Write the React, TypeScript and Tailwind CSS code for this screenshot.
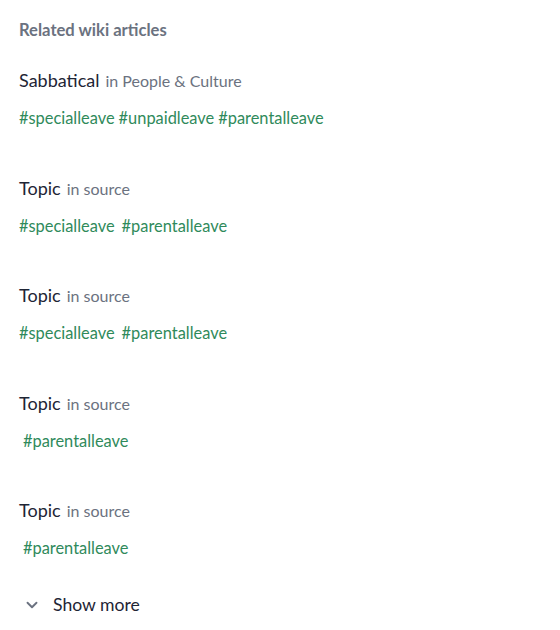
import React from 'react';
import { ChevronDown } from 'lucide-react';

interface Article {
  title: string;
  source: string;
  tags: string[];
  indent?: boolean;
  spaced?: boolean;
}

const articles: Article[] = [
  { title: 'Sabbatical', source: 'in People & Culture', tags: ['#specialleave', '#unpaidleave', '#parentalleave'] },
  { title: 'Topic', source: 'in source', tags: ['#specialleave', '#parentalleave'], spaced: true },
  { title: 'Topic', source: 'in source', tags: ['#specialleave', '#parentalleave'], spaced: true },
  { title: 'Topic', source: 'in source', tags: ['#parentalleave'], indent: true },
  { title: 'Topic', source: 'in source', tags: ['#parentalleave'], indent: true },
];

const ArticleRow: React.FC<{ article: Article }> = ({ article }) => (
  <div className="flex flex-col gap-[13px]">
    <div className="flex items-baseline gap-[6px] leading-6">
      <span className="text-[18px] text-[#1e2535]">{article.title}</span>
      <span className="text-[16px] text-[#6b7280]">{article.source}</span>
    </div>
    <div className={`flex leading-6 text-[16.4px] text-[#2f8a5b] ${article.spaced ? 'gap-[7px]' : 'gap-[4px]'} ${article.indent ? 'pl-[4px]' : ''}`}>
      {article.tags.map((tag, i) => (
        <span key={i}>{tag}</span>
      ))}
    </div>
  </div>
);

export default function App() {
  return (
    <div className="w-[560px] h-[630px] bg-white px-[19px] pt-[20px]" style={{ fontFamily: 'Lato, "Noto Sans", sans-serif' }}>
      <h3 className="text-[16.6px] leading-5 font-bold text-[#6b7280]">Related wiki articles</h3>

      <div className="mt-[28px] flex flex-col gap-[45.5px]">
        {articles.map((a, i) => (
          <ArticleRow key={i} article={a} />
        ))}
      </div>

      <button className="mt-[33px] flex items-center gap-[12px] pl-[4px] leading-6 text-[17.6px] text-[#1e2535]">
        <ChevronDown className="w-[18px] h-[18px] text-[#6b7280]" strokeWidth={2.5} />
        <span>Show more</span>
      </button>
    </div>
  );
}
